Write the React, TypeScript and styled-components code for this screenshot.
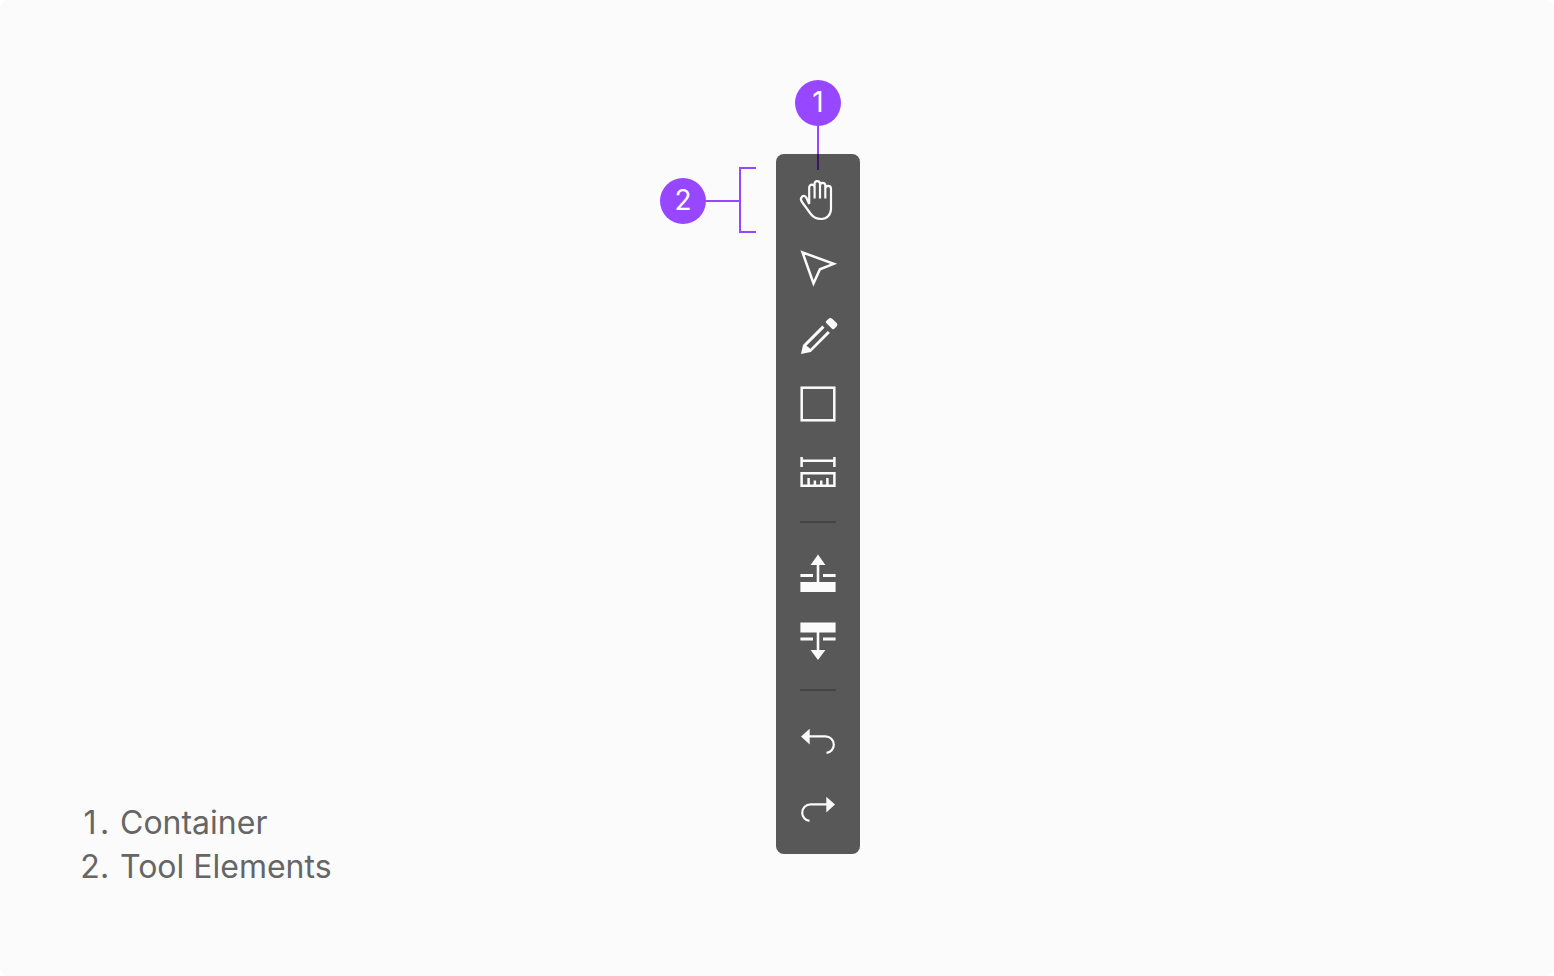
import React from "react";
import styled, { createGlobalStyle } from "styled-components";

const accent = "#9747ff";

const GlobalStyle = createGlobalStyle`
  *, *::before, *::after { box-sizing: border-box; }
  body {
    margin: 0;
    background: #ffffff;
    font-family: Inter, "Liberation Sans", sans-serif;
  }
`;

const Page = styled.main`
  display: grid;
  grid-template-columns: minmax(260px, 580fr) minmax(200px, 814fr);
  align-items: start;
  min-height: 100vh;
  padding: 80px;
  border-radius: 8px;
  background: #fbfbfb;
`;

const Legend = styled.ol`
  align-self: end;
  margin: 0;
  padding: 0 0 7px;
  list-style: none;
  color: #666666;
  font-size: 32px;
  line-height: 44px;
`;

const LegendItem = styled.li`
  display: flex;
`;

const LegendNumber = styled.span`
  display: flex;
  width: 40px;
`;

const LegendDigit = styled.span`
  width: 20px;
  text-align: center;
`;

const Anatomy = styled.section`
  display: grid;
  grid-template-columns: 96px 84px;
  column-gap: 20px;
`;

const TopCallout = styled.div`
  grid-column: 2;
  display: flex;
  flex-direction: column;
  align-items: center;
  margin-bottom: -16px;
`;

const SideCallout = styled.div`
  grid-column: 1;
  display: flex;
  align-items: center;
  align-self: start;
  min-height: 68px;
  margin-top: 13px;
`;

const Badge = styled.span`
  display: flex;
  align-items: center;
  justify-content: center;
  width: 46px;
  height: 46px;
  padding-bottom: 2px;
  border-radius: 50%;
  background: ${accent};
  color: #ffffff;
  font-size: 28px;
  line-height: 32px;
`;

const Stem = styled.span<{ $vertical?: boolean }>`
  width: ${(p) => (p.$vertical ? "2px" : "33px")};
  height: ${(p) => (p.$vertical ? "44px" : "2px")};
  background: ${accent};
`;

const Bracket = styled.span`
  align-self: flex-start;
  width: 17px;
  height: 66px;
  border: 2px solid ${accent};
  border-right: 0;
`;

const Toolbar = styled.div`
  grid-column: 2;
  position: relative;
  display: flex;
  flex-direction: column;
  align-items: center;
  gap: 4px;
  padding: 14px 10px;
  border-radius: 8px;
  background: rgba(0, 0, 0, 0.65);
`;

const ToolButton = styled.button`
  display: flex;
  align-items: center;
  justify-content: center;
  width: 64px;
  height: 64px;
  padding: 0;
  border: 0;
  border-radius: 4px;
  background: transparent;
  color: #fbfbfb;
  cursor: pointer;
`;

const Divider = styled.hr`
  width: 36px;
  height: 2px;
  margin: 13px 0;
  border: 0;
  background: #444444;
`;

const Icon = styled.svg.attrs({ viewBox: "0 0 44 44", "aria-hidden": true })`
  width: 44px;
  height: 44px;
  fill: none;
  stroke: currentColor;
  stroke-width: 2.5;

  .solid {
    fill: currentColor;
    stroke: none;
  }

  .thin {
    stroke-width: 2.2;
    stroke-linejoin: round;
  }
`;

const HandIcon = () => (
  <Icon>
    <path
      className="thin"
      d="M13.2 26V9.4a2.7 2.7 0 0 1 5.4 0V20.4M18.6 10V5.8a2.7 2.7 0 0 1 5.4 0V20.4M24 8V7.6a2.65 2.65 0 0 1 5.3 0V20.4M29.3 11V10.8a2.85 2.85 0 0 1 5.7 0V30.5C35 36.8 31 41 25.2 41C20.6 41 17.3 39.4 14.8 36L6 24C4.6 22 4.6 20 6 18.7C7.5 17.4 9.4 17.9 10.4 19.8L13.2 26"
    />
  </Icon>
);

const PointerIcon = () => (
  <Icon>
    <path d="M6.5 6.4L37.7 17.8L23.9 23.3L17.5 37.4Z" />
  </Icon>
);

const PencilIcon = () => (
  <Icon>
    <path
      className="solid"
      d="M32.6 4.8Q34.4 3.1 36.2 4.7L40.7 9Q42.1 10.6 40.8 12.2L38.6 14.6Q37.2 15.8 36 14.7L30.2 8.9Q29.2 8.1 30.2 7.1ZM26.3 11.6L28.5 13.7L10.4 31.8L14.4 34.8L31.8 17L33.9 19.1L14.8 37.9L5 40L7 31Z"
    />
  </Icon>
);

const RectangleIcon = () => (
  <Icon>
    <rect x="5.7" y="5.7" width="32.6" height="32.6" />
  </Icon>
);

const RulerIcon = () => (
  <Icon>
    <path d="M5.6 7V17M38.4 7V17M5.6 10.8H38.4M5.6 23.3H38.4V35.8H5.6ZM12.6 35.8V28M18.9 35.8V30.4M25.2 35.8V30.4M31.4 35.8V28" />
  </Icon>
);

const BringForwardIcon = () => (
  <Icon>
    <path
      className="solid"
      d="M22 4.6L29.4 15H23.3V32H39.6V42H4.4V32H20.7V15H14.6ZM4.4 24H17V27H4.4ZM27 24H39.6V27H27Z"
    />
  </Icon>
);

const SendBackwardIcon = () => (
  <Icon>
    <path
      className="solid"
      d="M4.4 4.4H39.6V14.6H23.3V32H29.4L22 42L14.6 32H20.7V14.6H4.4ZM4.4 19.6H17V22.6H4.4ZM27 19.6H39.6V22.6H27Z"
    />
  </Icon>
);

const UndoIcon = () => (
  <Icon>
    <path className="solid" d="M5 18.6L13.7 10.7V26.4Z" />
    <path className="thin" d="M13 18.3H29.4A8.4 8.4 0 0 1 37.8 26.7A8.3 8.3 0 0 1 30.5 34.9" />
  </Icon>
);

const RedoIcon = () => (
  <Icon>
    <path className="solid" d="M39 18.6L30.3 10.7V26.4Z" />
    <path className="thin" d="M31 18.3H14.6A8.4 8.4 0 0 0 6.2 26.7A8.3 8.3 0 0 0 13.5 34.9" />
  </Icon>
);

const groups = [
  [
    { label: "Pan", Glyph: HandIcon },
    { label: "Select", Glyph: PointerIcon },
    { label: "Draw", Glyph: PencilIcon },
    { label: "Rectangle", Glyph: RectangleIcon },
    { label: "Measure", Glyph: RulerIcon },
  ],
  [
    { label: "Bring forward", Glyph: BringForwardIcon },
    { label: "Send backward", Glyph: SendBackwardIcon },
  ],
  [
    { label: "Undo", Glyph: UndoIcon },
    { label: "Redo", Glyph: RedoIcon },
  ],
];

const legend = ["Container", "Tool Elements"];

export default function App() {
  return (
    <Page>
      <GlobalStyle />
      <Legend>
        {legend.map((text, i) => (
          <LegendItem key={text}>
            <LegendNumber>
              <LegendDigit>{i + 1}</LegendDigit>.
            </LegendNumber>
            <span>{text}</span>
          </LegendItem>
        ))}
      </Legend>
      <Anatomy>
        <TopCallout>
          <Badge>1</Badge>
          <Stem $vertical />
        </TopCallout>
        <SideCallout>
          <Badge>2</Badge>
          <Stem />
          <Bracket />
        </SideCallout>
        <Toolbar role="toolbar" aria-orientation="vertical" aria-label="Tools">
          {groups.map((tools, i) => (
            <React.Fragment key={i}>
              {i > 0 && <Divider />}
              {tools.map(({ label, Glyph }) => (
                <ToolButton key={label} type="button" aria-label={label}>
                  <Glyph />
                </ToolButton>
              ))}
            </React.Fragment>
          ))}
        </Toolbar>
      </Anatomy>
    </Page>
  );
}
